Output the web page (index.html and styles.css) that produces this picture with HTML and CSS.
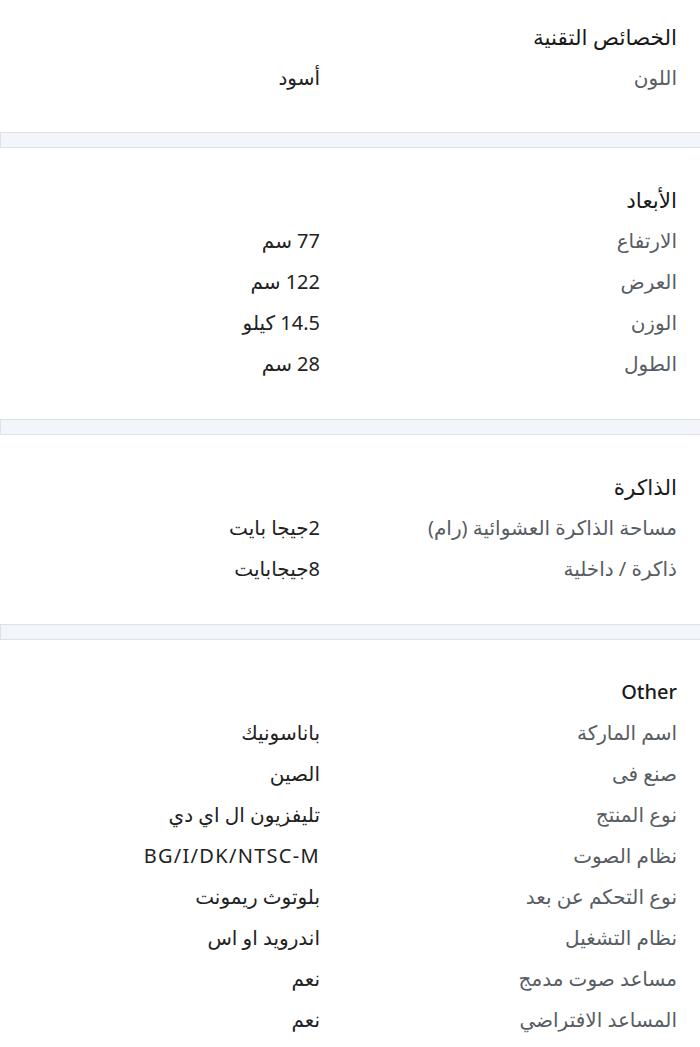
FILE: index.html
```html
<!DOCTYPE html>
<html lang="ar" dir="rtl">
<head>
<meta charset="utf-8">
<link rel="stylesheet" href="styles.css">
</head>
<body>
<div class="page">
  <section class="section first">
    <h2 class="heading">الخصائص التقنية</h2>
    <div class="row"><span class="label">اللون</span><span class="value">أسود</span></div>
  </section>
  <div class="sep"></div>
  <section class="section">
    <h2 class="heading">الأبعاد</h2>
    <div class="row"><span class="label">الارتفاع</span><span class="value">77 سم</span></div>
    <div class="row"><span class="label">العرض</span><span class="value">122 سم</span></div>
    <div class="row"><span class="label">الوزن</span><span class="value">14.5 كيلو</span></div>
    <div class="row"><span class="label">الطول</span><span class="value">28 سم</span></div>
  </section>
  <div class="sep"></div>
  <section class="section">
    <h2 class="heading">الذاكرة</h2>
    <div class="row"><span class="label">مساحة الذاكرة العشوائية (رام)</span><span class="value">2جيجا بايت</span></div>
    <div class="row"><span class="label">ذاكرة / داخلية</span><span class="value">8جيجابايت</span></div>
  </section>
  <div class="sep"></div>
  <section class="section">
    <h2 class="heading latin-heading">Other</h2>
    <div class="row"><span class="label">اسم الماركة</span><span class="value">باناسونيك</span></div>
    <div class="row"><span class="label">صنع فى</span><span class="value">الصين</span></div>
    <div class="row"><span class="label">نوع المنتج</span><span class="value">تليفزيون ال اي دي</span></div>
    <div class="row"><span class="label">نظام الصوت</span><span class="value latin">BG/I/DK/NTSC-M</span></div>
    <div class="row"><span class="label">نوع التحكم عن بعد</span><span class="value">بلوتوث ريمونت</span></div>
    <div class="row"><span class="label">نظام التشغيل</span><span class="value">اندرويد او اس</span></div>
    <div class="row"><span class="label">مساعد صوت مدمج</span><span class="value">نعم</span></div>
    <div class="row"><span class="label">المساعد الافتراضي</span><span class="value">نعم</span></div>
  </section>
</div>
</body>
</html>
```

FILE: styles.css
```css
html, body {
  margin: 0;
  padding: 0;
  background: #ffffff;
}
body {
  font-family: "Noto Sans", "DejaVu Sans", sans-serif;
  font-size: 20px;
  color: #222222;
}
.page {
  width: 700px;
  height: 1047px;
  overflow: hidden;
}
.section {
  padding: 32px 23px 35px 23px;
}
.section.first {
  padding-top: 17px;
  padding-bottom: 34px;
}
.heading {
  margin: 0;
  height: 40px;
  line-height: 40px;
  font-size: 21.5px;
  font-weight: 500;
  color: #1a1a1a;
}
.heading.latin-heading {
  font-size: 20px;
}
.row {
  display: grid;
  grid-template-columns: 357px 1fr;
  height: 41px;
  line-height: 41px;
  white-space: nowrap;
}
.label {
  color: #585d63;
}
.value {
  color: #222222;
}
.value.latin {
  letter-spacing: 1.3px;
}
.sep {
  height: 14px;
  background: #f2f6fa;
  border-top: 1px solid #dde2e7;
  border-bottom: 1px solid #dde2e7;
  border-left: 1px solid #dde2e7;
}
```
